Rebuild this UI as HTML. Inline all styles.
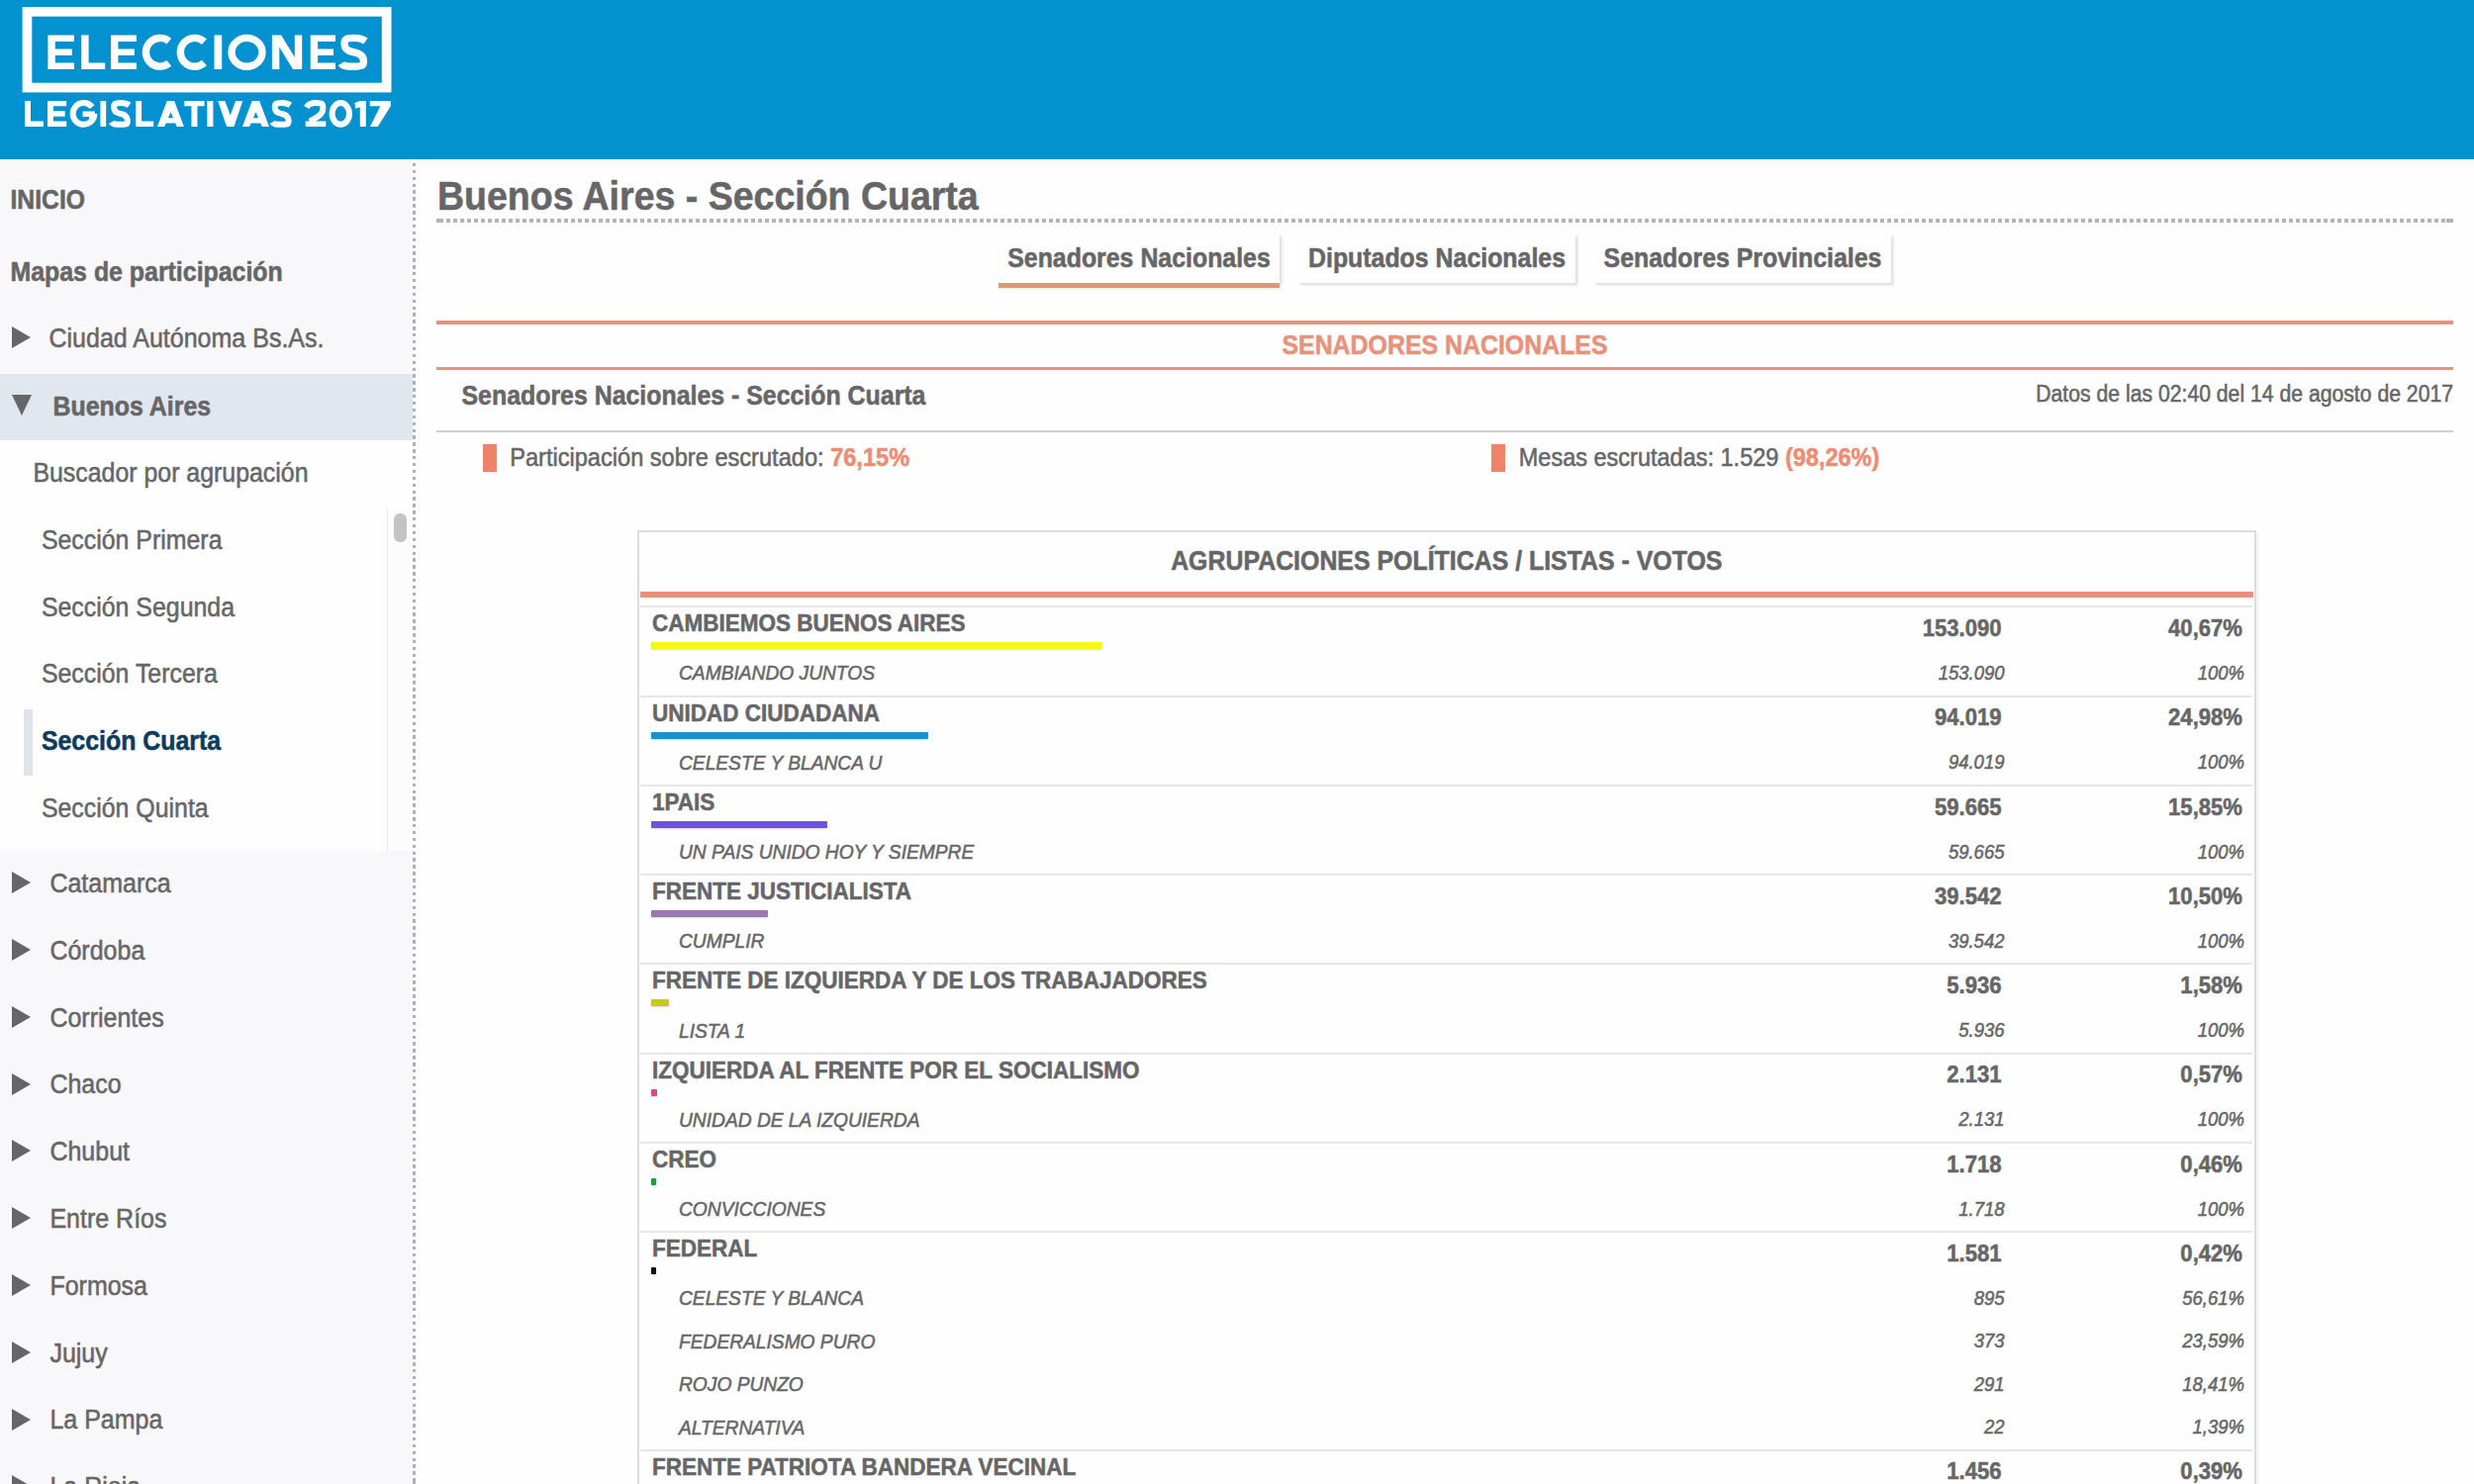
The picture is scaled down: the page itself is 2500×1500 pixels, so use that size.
<!DOCTYPE html>
<html><head><meta charset="utf-8"><title>Elecciones Legislativas 2017</title>
<style>
html,body{margin:0;padding:0;}
body{width:2500px;height:1500px;overflow:hidden;position:relative;background:#fefefe;font-family:"Liberation Sans",sans-serif;color:#666668;}
.t{position:absolute;line-height:1;white-space:nowrap;}
.r{position:absolute;}
.b{font-weight:bold;}
.tri{position:absolute;width:0;height:0;}
</style></head><body>
<div class="r" style="left:0px;top:0px;width:2500px;height:161px;background:#0391d0;"></div>
<svg style="position:absolute;left:0;top:0" width="420" height="160" viewBox="0 0 420 160"><rect x="27.45" y="11.85" width="363.2" height="76.7" fill="none" stroke="#fdfdfd" stroke-width="9.7"/><path d="M48.40 35.60H55.80V70.00H48.40ZM48.40 35.60H74.90V42.00H48.40ZM48.40 49.60H72.78V56.00H48.40ZM48.40 63.60H74.90V70.00H48.40ZM82.20 35.60H89.60V70.00H82.20ZM82.20 63.60H106.20V70.00H82.20ZM112.00 35.60H119.40V70.00H112.00ZM112.00 35.60H137.90V42.00H112.00ZM112.00 49.60H135.83V56.00H112.00ZM112.00 63.60H137.90V70.00H112.00ZM216.50 35.60H224.20V70.00H216.50ZM274.90 35.60H282.30V70.00H274.90ZM297.80 35.60H305.20V70.00H297.80ZM274.90 35.60L284.15 35.60L305.20 70.00L295.95 70.00ZM313.70 35.60H321.10V70.00H313.70ZM313.70 35.60H339.00V42.00H313.70ZM313.70 49.60H336.98V56.00H313.70ZM313.70 63.60H339.00V70.00H313.70ZM25.00 101.90H31.00V128.00H25.00ZM25.00 122.60H43.80V128.00H25.00ZM48.00 101.90H54.00V128.00H48.00ZM48.00 101.90H67.20V107.30H48.00ZM48.00 112.25H65.66V117.65H48.00ZM48.00 122.60H67.20V128.00H48.00ZM83.55 112.55H96.00V117.95H83.55ZM90.00 112.55H96.00V121.46H90.00ZM101.40 101.90H107.20V128.00H101.40ZM137.10 101.90H143.10V128.00H137.10ZM137.10 122.60H155.20V128.00H137.10ZM159.00 128.00L168.73 101.90L176.17 101.90L185.90 128.00L178.70 128.00L172.45 113.30L166.20 128.00ZM164.92 119.13H179.98V124.53H164.92ZM186.30 101.90H206.60V107.30H186.30ZM193.45 101.90H199.45V128.00H193.45ZM209.30 101.90H215.40V128.00H209.30ZM220.20 101.90L227.40 101.90L232.75 116.60L238.10 101.90L245.30 101.90L236.47 128.00L229.03 128.00ZM244.90 128.00L254.73 101.90L262.17 101.90L272.00 128.00L264.80 128.00L258.45 113.30L252.10 128.00ZM250.86 119.13H266.04V124.53H250.86ZM308.70 122.60H329.30V128.00H308.70ZM363.80 101.90H369.80V128.00H363.80ZM363.80 101.90L368.60 106.70L359.30 109.73L358.40 104.03ZM373.80 101.90H394.80V107.30H373.80ZM387.00 101.90L394.80 101.90L394.80 107.30L381.78 128.00L373.98 128.00Z" fill="#fdfdfd"/><path d="M170.86 41.61A14.40 14.40 0 1 0 170.86 63.99M206.40 42.16A14.40 14.40 0 1 0 206.40 63.44M265.00 52.80A15.50 14.40 0 1 0 234.00 52.80A15.50 14.40 0 1 0 265.00 52.80M369.50 41.58C365.23 38.40 359.08 38.40 357.75 38.40C347.60 38.40 348.10 40.89 348.10 44.68C348.10 51.42 354.55 52.11 357.75 52.80C360.95 53.49 367.40 54.86 367.40 61.61C367.40 66.08 367.36 67.20 357.75 67.20C350.27 67.20 346.54 66.77 344.93 64.02" fill="none" stroke="#fdfdfd" stroke-width="7.4"/><path d="M93.10 108.27A10.85 10.85 0 1 0 95.40 114.95M130.62 106.32C127.49 104.10 122.98 104.10 122.00 104.10C114.55 104.10 115.20 105.80 115.20 108.67C115.20 113.91 119.65 114.43 122.00 114.95C124.35 115.47 128.80 116.52 128.80 121.75C128.80 125.15 129.06 125.80 122.00 125.80C116.51 125.80 113.77 125.67 112.59 123.58M293.41 106.32C290.24 104.10 285.69 104.10 284.70 104.10C277.18 104.10 277.80 105.80 277.80 108.67C277.80 113.91 282.32 114.43 284.70 114.95C287.08 115.47 291.60 116.52 291.60 121.75C291.60 125.15 291.83 125.80 284.70 125.80C279.16 125.80 276.38 125.67 275.20 123.58M309.73 108.43C311.79 104.90 316.94 104.10 319.00 104.10C327.24 104.10 326.30 105.81 326.30 109.73C326.30 113.65 325.18 116.26 312.90 122.60M353.00 114.95A8.70 10.85 0 1 0 335.60 114.95A8.70 10.85 0 1 0 353.00 114.95" fill="none" stroke="#fdfdfd" stroke-width="6.0"/></svg>
<div class="r" style="left:0px;top:161px;width:417px;height:1339px;background:#f8f7f9;"></div>
<div class="r" style="left:416.5px;top:161px;width:3.5px;height:1339px;background:repeating-linear-gradient(to bottom,#b0b0b2 0,#b0b0b2 3.4px,transparent 3.4px,transparent 6.888px);background-position:0 -3.1px;"></div>
<div class="t " style="top:190.6px;font-size:24.7px;left:10.5px;font-weight:bold;transform:scaleY(1.085);transform-origin:0 20.91px;-webkit-text-stroke:0.5px currentColor;">INICIO</div>
<div class="t " style="top:262.6px;font-size:24.9px;left:10.5px;font-weight:bold;transform:scaleY(1.085);transform-origin:0 21.08px;-webkit-text-stroke:0.5px currentColor;">Mapas de participación</div>
<div class="tri" style="left:12px;top:329.6px;border-top:11px solid transparent;border-bottom:11px solid transparent;border-left:19px solid #666668;"></div>
<div class="t " style="top:330.4px;font-size:25px;left:49.5px;transform:scaleY(1.085);transform-origin:0 21.17px;-webkit-text-stroke:0.5px currentColor;">Ciudad Autónoma Bs.As.</div>
<div class="r" style="left:0px;top:378px;width:417px;height:67px;background:#e1e7ee;"></div>
<div class="tri" style="left:12px;top:398.7px;border-left:10.5px solid transparent;border-right:10.5px solid transparent;border-top:21px solid #666668;"></div>
<div class="t " style="top:398.6px;font-size:24.9px;left:53.6px;font-weight:bold;transform:scaleY(1.085);transform-origin:0 21.08px;-webkit-text-stroke:0.5px currentColor;">Buenos Aires</div>
<div class="r" style="left:0px;top:445px;width:417px;height:68px;background:#fefefe;"></div>
<div class="r" style="left:0px;top:513px;width:391px;height:347px;background:#fefefe;"></div>
<div class="r" style="left:391px;top:513px;width:25.5px;height:347px;background:#fcfcfd;"></div>
<div class="r" style="left:390.5px;top:513px;width:1.5px;height:347px;background:#e9e9eb;"></div>
<div class="r" style="left:398px;top:519px;width:13px;height:29px;border-radius:6px;background:#c3c3c5;"></div>
<div class="t " style="top:466.4px;font-size:24.9px;left:33.4px;transform:scaleY(1.085);transform-origin:0 21.08px;-webkit-text-stroke:0.5px currentColor;">Buscador por agrupación</div>
<div class="t " style="top:533.5px;font-size:24.9px;left:41.9px;transform:scaleY(1.085);transform-origin:0 21.08px;-webkit-text-stroke:0.5px currentColor;">Sección Primera</div>
<div class="t " style="top:601.5px;font-size:24.9px;left:41.9px;transform:scaleY(1.085);transform-origin:0 21.08px;-webkit-text-stroke:0.5px currentColor;">Sección Segunda</div>
<div class="t " style="top:669.4px;font-size:24.9px;left:41.9px;transform:scaleY(1.085);transform-origin:0 21.08px;-webkit-text-stroke:0.5px currentColor;">Sección Tercera</div>
<div class="r" style="left:24px;top:717px;width:9px;height:67px;background:#dfe4eb;"></div>
<div class="t " style="top:737.4px;font-size:24.9px;left:41.9px;color:#0d3b5c;font-weight:bold;transform:scaleY(1.085);transform-origin:0 21.08px;-webkit-text-stroke:0.5px currentColor;">Sección Cuarta</div>
<div class="t " style="top:805.3px;font-size:24.9px;left:41.9px;transform:scaleY(1.085);transform-origin:0 21.08px;-webkit-text-stroke:0.5px currentColor;">Sección Quinta</div>
<div class="tri" style="left:12px;top:881.2px;border-top:11px solid transparent;border-bottom:11px solid transparent;border-left:19px solid #666668;"></div>
<div class="t " style="top:881.0px;font-size:25px;left:50.4px;transform:scaleY(1.085);transform-origin:0 21.17px;-webkit-text-stroke:0.5px currentColor;">Catamarca</div>
<div class="tri" style="left:12px;top:949.0px;border-top:11px solid transparent;border-bottom:11px solid transparent;border-left:19px solid #666668;"></div>
<div class="t " style="top:948.8px;font-size:25px;left:50.4px;transform:scaleY(1.085);transform-origin:0 21.17px;-webkit-text-stroke:0.5px currentColor;">Córdoba</div>
<div class="tri" style="left:12px;top:1016.8px;border-top:11px solid transparent;border-bottom:11px solid transparent;border-left:19px solid #666668;"></div>
<div class="t " style="top:1016.6px;font-size:25px;left:50.4px;transform:scaleY(1.085);transform-origin:0 21.17px;-webkit-text-stroke:0.5px currentColor;">Corrientes</div>
<div class="tri" style="left:12px;top:1084.6px;border-top:11px solid transparent;border-bottom:11px solid transparent;border-left:19px solid #666668;"></div>
<div class="t " style="top:1084.4px;font-size:25px;left:50.4px;transform:scaleY(1.085);transform-origin:0 21.17px;-webkit-text-stroke:0.5px currentColor;">Chaco</div>
<div class="tri" style="left:12px;top:1152.4px;border-top:11px solid transparent;border-bottom:11px solid transparent;border-left:19px solid #666668;"></div>
<div class="t " style="top:1152.2px;font-size:25px;left:50.4px;transform:scaleY(1.085);transform-origin:0 21.17px;-webkit-text-stroke:0.5px currentColor;">Chubut</div>
<div class="tri" style="left:12px;top:1220.2px;border-top:11px solid transparent;border-bottom:11px solid transparent;border-left:19px solid #666668;"></div>
<div class="t " style="top:1220.0px;font-size:25px;left:50.4px;transform:scaleY(1.085);transform-origin:0 21.17px;-webkit-text-stroke:0.5px currentColor;">Entre Ríos</div>
<div class="tri" style="left:12px;top:1288.0px;border-top:11px solid transparent;border-bottom:11px solid transparent;border-left:19px solid #666668;"></div>
<div class="t " style="top:1287.8px;font-size:25px;left:50.4px;transform:scaleY(1.085);transform-origin:0 21.17px;-webkit-text-stroke:0.5px currentColor;">Formosa</div>
<div class="tri" style="left:12px;top:1355.8px;border-top:11px solid transparent;border-bottom:11px solid transparent;border-left:19px solid #666668;"></div>
<div class="t " style="top:1355.6px;font-size:25px;left:50.4px;transform:scaleY(1.085);transform-origin:0 21.17px;-webkit-text-stroke:0.5px currentColor;">Jujuy</div>
<div class="tri" style="left:12px;top:1423.6px;border-top:11px solid transparent;border-bottom:11px solid transparent;border-left:19px solid #666668;"></div>
<div class="t " style="top:1423.4px;font-size:25px;left:50.4px;transform:scaleY(1.085);transform-origin:0 21.17px;-webkit-text-stroke:0.5px currentColor;">La Pampa</div>
<div class="tri" style="left:12px;top:1491.4px;border-top:11px solid transparent;border-bottom:11px solid transparent;border-left:19px solid #666668;"></div>
<div class="t " style="top:1491.2px;font-size:25px;left:50.4px;transform:scaleY(1.085);transform-origin:0 21.17px;-webkit-text-stroke:0.5px currentColor;">La Rioja</div>
<div class="t " style="top:180.8px;font-size:37.5px;left:442.0px;font-weight:bold;transform:scaleY(1.085);transform-origin:0 31.75px;-webkit-text-stroke:0.5px currentColor;">Buenos Aires - Sección Cuarta</div>
<div class="r" style="left:444px;top:221px;width:2028px;height:3.8px;background:repeating-linear-gradient(to right,#b4b4b6 0,#b4b4b6 3.75px,transparent 3.75px,transparent 7px);"></div>
<div class="r" style="left:441px;top:221px;width:4px;height:3.8000000000000114px;background:#b4b4b6;"></div>
<div class="r" style="left:2472px;top:221px;width:7px;height:3.8000000000000114px;background:#b4b4b6;"></div>
<div class="r" style="left:1009px;top:237px;width:284px;height:49px;background:#fefefe;box-shadow:2px 2px 3px rgba(0,0,0,0.15);"></div>
<div class="r" style="left:1009px;top:286px;width:284px;height:5px;background:#e8927b;box-shadow:0 1px 2px rgba(0,0,0,0.1);"></div>
<div class="t " style="top:248.9px;font-size:24.9px;left:1151.0px;font-weight:bold;transform:translateX(-50%) scaleY(1.085);transform-origin:0 21.08px;-webkit-text-stroke:0.5px currentColor;">Senadores Nacionales</div>
<div class="r" style="left:1312px;top:237px;width:280px;height:49px;background:#fefefe;box-shadow:2px 2px 3px rgba(0,0,0,0.15);"></div>
<div class="t " style="top:248.9px;font-size:24.9px;left:1452.0px;font-weight:bold;transform:translateX(-50%) scaleY(1.085);transform-origin:0 21.08px;-webkit-text-stroke:0.5px currentColor;">Diputados Nacionales</div>
<div class="r" style="left:1611px;top:237px;width:300px;height:49px;background:#fefefe;box-shadow:2px 2px 3px rgba(0,0,0,0.15);"></div>
<div class="t " style="top:248.9px;font-size:24.9px;left:1761.0px;font-weight:bold;transform:translateX(-50%) scaleY(1.085);transform-origin:0 21.08px;-webkit-text-stroke:0.5px currentColor;">Senadores Provinciales</div>
<div class="r" style="left:441px;top:324px;width:2038px;height:4px;background:#e8927b;"></div>
<div class="t " style="top:336.5px;font-size:24.9px;left:1460.0px;color:#e8927b;font-weight:bold;transform:translateX(-50%) scaleY(1.085);transform-origin:0 21.08px;-webkit-text-stroke:0.5px currentColor;">SENADORES NACIONALES</div>
<div class="r" style="left:441px;top:371px;width:2038px;height:3px;background:#e8927b;"></div>
<div class="t " style="top:387.7px;font-size:24.9px;left:466.5px;font-weight:bold;transform:scaleY(1.085);transform-origin:0 21.08px;-webkit-text-stroke:0.5px currentColor;">Senadores Nacionales - Sección Cuarta</div>
<div class="t " style="top:387.6px;font-size:21.2px;right:21.0px;transform:scaleY(1.085);transform-origin:100% 17.95px;-webkit-text-stroke:0.5px currentColor;">Datos de las 02:40 del 14 de agosto de 2017</div>
<div class="r" style="left:441px;top:435px;width:2038px;height:2px;background:#cfcfd1;"></div>
<div class="r" style="left:488px;top:449px;width:14px;height:28px;background:#f08269;"></div>
<div class="t " style="top:451.8px;font-size:23.6px;left:515.2px;transform:scaleY(1.085);transform-origin:0 19.98px;-webkit-text-stroke:0.5px currentColor;">Participación sobre escrutado: <b style="color:#ef8b72">76,15%</b></div>
<div class="r" style="left:1507px;top:449px;width:14px;height:28px;background:#f08269;"></div>
<div class="t " style="top:451.6px;font-size:23.5px;left:1534.8px;transform:scaleY(1.085);transform-origin:0 19.90px;-webkit-text-stroke:0.5px currentColor;">Mesas escrutadas: 1.529 <b style="color:#ef8b72">(98,26%)</b></div>
<div class="r" style="left:644px;top:536px;width:1631.5px;height:1000px;border:2px solid #dcdcde;border-bottom:none;background:#fefefe;box-shadow:2px 2px 3px rgba(0,0,0,0.06);"></div>
<div class="t " style="top:554.9px;font-size:24.9px;left:1461.8px;font-weight:bold;transform:translateX(-50%) scaleY(1.085);transform-origin:0 21.08px;-webkit-text-stroke:0.5px currentColor;">AGRUPACIONES POLÍTICAS / LISTAS - VOTOS</div>
<div class="r" style="left:647px;top:598px;width:1630px;height:6px;background:#e8927b;"></div>
<div class="r" style="left:647px;top:612px;width:1629px;height:2px;background:#e6e6e8;"></div>
<div class="t " style="top:620.2px;font-size:22.5px;left:658.9px;font-weight:bold;transform:scaleY(1.085);transform-origin:0 19.05px;-webkit-text-stroke:0.5px currentColor;">CAMBIEMOS BUENOS AIRES</div>
<div class="t " style="top:624.9px;font-size:22.1px;right:477.4px;font-weight:bold;transform:scaleY(1.085);transform-origin:100% 18.71px;-webkit-text-stroke:0.5px currentColor;">153.090</div>
<div class="t " style="top:624.9px;font-size:22.1px;right:234.0px;font-weight:bold;transform:scaleY(1.085);transform-origin:100% 18.71px;-webkit-text-stroke:0.5px currentColor;">40,67%</div>
<div class="r" style="left:658px;top:649px;width:456px;height:7px;background:#f6f61a;box-shadow:0 1px 2px rgba(0,0,0,0.15);border-radius:1px;"></div>
<div class="t " style="top:671.3px;font-size:19.2px;left:686.0px;font-style:italic;transform:scaleY(1.085);transform-origin:0 16.26px;-webkit-text-stroke:0.5px currentColor;">CAMBIANDO JUNTOS</div>
<div class="t " style="top:671.9px;font-size:18.5px;right:474.5px;font-style:italic;transform:scaleY(1.085);transform-origin:100% 15.66px;-webkit-text-stroke:0.5px currentColor;">153.090</div>
<div class="t " style="top:671.9px;font-size:18.5px;right:232.0px;font-style:italic;transform:scaleY(1.085);transform-origin:100% 15.66px;-webkit-text-stroke:0.5px currentColor;">100%</div>
<div class="r" style="left:647px;top:703px;width:1629px;height:2px;background:#e6e6e8;"></div>
<div class="t " style="top:710.5px;font-size:22.5px;left:658.9px;font-weight:bold;transform:scaleY(1.085);transform-origin:0 19.05px;-webkit-text-stroke:0.5px currentColor;">UNIDAD CIUDADANA</div>
<div class="t " style="top:715.2px;font-size:22.1px;right:477.4px;font-weight:bold;transform:scaleY(1.085);transform-origin:100% 18.71px;-webkit-text-stroke:0.5px currentColor;">94.019</div>
<div class="t " style="top:715.2px;font-size:22.1px;right:234.0px;font-weight:bold;transform:scaleY(1.085);transform-origin:100% 18.71px;-webkit-text-stroke:0.5px currentColor;">24,98%</div>
<div class="r" style="left:658px;top:740px;width:280px;height:7px;background:#1d90cb;box-shadow:0 1px 2px rgba(0,0,0,0.15);border-radius:1px;"></div>
<div class="t " style="top:761.6px;font-size:19.2px;left:686.0px;font-style:italic;transform:scaleY(1.085);transform-origin:0 16.26px;-webkit-text-stroke:0.5px currentColor;">CELESTE Y BLANCA U</div>
<div class="t " style="top:762.2px;font-size:18.5px;right:474.5px;font-style:italic;transform:scaleY(1.085);transform-origin:100% 15.66px;-webkit-text-stroke:0.5px currentColor;">94.019</div>
<div class="t " style="top:762.2px;font-size:18.5px;right:232.0px;font-style:italic;transform:scaleY(1.085);transform-origin:100% 15.66px;-webkit-text-stroke:0.5px currentColor;">100%</div>
<div class="r" style="left:647px;top:793px;width:1629px;height:2px;background:#e6e6e8;"></div>
<div class="t " style="top:800.8px;font-size:22.5px;left:658.9px;font-weight:bold;transform:scaleY(1.085);transform-origin:0 19.05px;-webkit-text-stroke:0.5px currentColor;">1PAIS</div>
<div class="t " style="top:805.5px;font-size:22.1px;right:477.4px;font-weight:bold;transform:scaleY(1.085);transform-origin:100% 18.71px;-webkit-text-stroke:0.5px currentColor;">59.665</div>
<div class="t " style="top:805.5px;font-size:22.1px;right:234.0px;font-weight:bold;transform:scaleY(1.085);transform-origin:100% 18.71px;-webkit-text-stroke:0.5px currentColor;">15,85%</div>
<div class="r" style="left:658px;top:830px;width:178px;height:7px;background:#6f53df;box-shadow:0 1px 2px rgba(0,0,0,0.15);border-radius:1px;"></div>
<div class="t " style="top:851.9px;font-size:19.2px;left:686.0px;font-style:italic;transform:scaleY(1.085);transform-origin:0 16.26px;-webkit-text-stroke:0.5px currentColor;">UN PAIS UNIDO HOY Y SIEMPRE</div>
<div class="t " style="top:852.5px;font-size:18.5px;right:474.5px;font-style:italic;transform:scaleY(1.085);transform-origin:100% 15.66px;-webkit-text-stroke:0.5px currentColor;">59.665</div>
<div class="t " style="top:852.5px;font-size:18.5px;right:232.0px;font-style:italic;transform:scaleY(1.085);transform-origin:100% 15.66px;-webkit-text-stroke:0.5px currentColor;">100%</div>
<div class="r" style="left:647px;top:883px;width:1629px;height:2px;background:#e6e6e8;"></div>
<div class="t " style="top:891.1px;font-size:22.5px;left:658.9px;font-weight:bold;transform:scaleY(1.085);transform-origin:0 19.05px;-webkit-text-stroke:0.5px currentColor;">FRENTE JUSTICIALISTA</div>
<div class="t " style="top:895.8px;font-size:22.1px;right:477.4px;font-weight:bold;transform:scaleY(1.085);transform-origin:100% 18.71px;-webkit-text-stroke:0.5px currentColor;">39.542</div>
<div class="t " style="top:895.8px;font-size:22.1px;right:234.0px;font-weight:bold;transform:scaleY(1.085);transform-origin:100% 18.71px;-webkit-text-stroke:0.5px currentColor;">10,50%</div>
<div class="r" style="left:658px;top:920px;width:118px;height:7px;background:#9878ae;box-shadow:0 1px 2px rgba(0,0,0,0.15);border-radius:1px;"></div>
<div class="t " style="top:942.2px;font-size:19.2px;left:686.0px;font-style:italic;transform:scaleY(1.085);transform-origin:0 16.26px;-webkit-text-stroke:0.5px currentColor;">CUMPLIR</div>
<div class="t " style="top:942.8px;font-size:18.5px;right:474.5px;font-style:italic;transform:scaleY(1.085);transform-origin:100% 15.66px;-webkit-text-stroke:0.5px currentColor;">39.542</div>
<div class="t " style="top:942.8px;font-size:18.5px;right:232.0px;font-style:italic;transform:scaleY(1.085);transform-origin:100% 15.66px;-webkit-text-stroke:0.5px currentColor;">100%</div>
<div class="r" style="left:647px;top:973px;width:1629px;height:2px;background:#e6e6e8;"></div>
<div class="t " style="top:981.4px;font-size:22.5px;left:658.9px;font-weight:bold;transform:scaleY(1.085);transform-origin:0 19.05px;-webkit-text-stroke:0.5px currentColor;">FRENTE DE IZQUIERDA Y DE LOS TRABAJADORES</div>
<div class="t " style="top:986.1px;font-size:22.1px;right:477.4px;font-weight:bold;transform:scaleY(1.085);transform-origin:100% 18.71px;-webkit-text-stroke:0.5px currentColor;">5.936</div>
<div class="t " style="top:986.1px;font-size:22.1px;right:234.0px;font-weight:bold;transform:scaleY(1.085);transform-origin:100% 18.71px;-webkit-text-stroke:0.5px currentColor;">1,58%</div>
<div class="r" style="left:658px;top:1010px;width:18px;height:7px;background:#c9c91c;box-shadow:0 1px 2px rgba(0,0,0,0.15);border-radius:1px;"></div>
<div class="t " style="top:1032.5px;font-size:19.2px;left:686.0px;font-style:italic;transform:scaleY(1.085);transform-origin:0 16.26px;-webkit-text-stroke:0.5px currentColor;">LISTA 1</div>
<div class="t " style="top:1033.1px;font-size:18.5px;right:474.5px;font-style:italic;transform:scaleY(1.085);transform-origin:100% 15.66px;-webkit-text-stroke:0.5px currentColor;">5.936</div>
<div class="t " style="top:1033.1px;font-size:18.5px;right:232.0px;font-style:italic;transform:scaleY(1.085);transform-origin:100% 15.66px;-webkit-text-stroke:0.5px currentColor;">100%</div>
<div class="r" style="left:647px;top:1064px;width:1629px;height:2px;background:#e6e6e8;"></div>
<div class="t " style="top:1071.7px;font-size:22.5px;left:658.9px;font-weight:bold;transform:scaleY(1.085);transform-origin:0 19.05px;-webkit-text-stroke:0.5px currentColor;">IZQUIERDA AL FRENTE POR EL SOCIALISMO</div>
<div class="t " style="top:1076.4px;font-size:22.1px;right:477.4px;font-weight:bold;transform:scaleY(1.085);transform-origin:100% 18.71px;-webkit-text-stroke:0.5px currentColor;">2.131</div>
<div class="t " style="top:1076.4px;font-size:22.1px;right:234.0px;font-weight:bold;transform:scaleY(1.085);transform-origin:100% 18.71px;-webkit-text-stroke:0.5px currentColor;">0,57%</div>
<div class="r" style="left:658px;top:1101px;width:6px;height:7px;background:#e0458c;box-shadow:0 1px 2px rgba(0,0,0,0.15);border-radius:1px;"></div>
<div class="t " style="top:1122.8px;font-size:19.2px;left:686.0px;font-style:italic;transform:scaleY(1.085);transform-origin:0 16.26px;-webkit-text-stroke:0.5px currentColor;">UNIDAD DE LA IZQUIERDA</div>
<div class="t " style="top:1123.4px;font-size:18.5px;right:474.5px;font-style:italic;transform:scaleY(1.085);transform-origin:100% 15.66px;-webkit-text-stroke:0.5px currentColor;">2.131</div>
<div class="t " style="top:1123.4px;font-size:18.5px;right:232.0px;font-style:italic;transform:scaleY(1.085);transform-origin:100% 15.66px;-webkit-text-stroke:0.5px currentColor;">100%</div>
<div class="r" style="left:647px;top:1154px;width:1629px;height:2px;background:#e6e6e8;"></div>
<div class="t " style="top:1162.0px;font-size:22.5px;left:658.9px;font-weight:bold;transform:scaleY(1.085);transform-origin:0 19.05px;-webkit-text-stroke:0.5px currentColor;">CREO</div>
<div class="t " style="top:1166.7px;font-size:22.1px;right:477.4px;font-weight:bold;transform:scaleY(1.085);transform-origin:100% 18.71px;-webkit-text-stroke:0.5px currentColor;">1.718</div>
<div class="t " style="top:1166.7px;font-size:22.1px;right:234.0px;font-weight:bold;transform:scaleY(1.085);transform-origin:100% 18.71px;-webkit-text-stroke:0.5px currentColor;">0,46%</div>
<div class="r" style="left:658px;top:1191px;width:5px;height:7px;background:#20a030;box-shadow:0 1px 2px rgba(0,0,0,0.15);border-radius:1px;"></div>
<div class="t " style="top:1213.1px;font-size:19.2px;left:686.0px;font-style:italic;transform:scaleY(1.085);transform-origin:0 16.26px;-webkit-text-stroke:0.5px currentColor;">CONVICCIONES</div>
<div class="t " style="top:1213.7px;font-size:18.5px;right:474.5px;font-style:italic;transform:scaleY(1.085);transform-origin:100% 15.66px;-webkit-text-stroke:0.5px currentColor;">1.718</div>
<div class="t " style="top:1213.7px;font-size:18.5px;right:232.0px;font-style:italic;transform:scaleY(1.085);transform-origin:100% 15.66px;-webkit-text-stroke:0.5px currentColor;">100%</div>
<div class="r" style="left:647px;top:1244px;width:1629px;height:2px;background:#e6e6e8;"></div>
<div class="t " style="top:1252.3px;font-size:22.5px;left:658.9px;font-weight:bold;transform:scaleY(1.085);transform-origin:0 19.05px;-webkit-text-stroke:0.5px currentColor;">FEDERAL</div>
<div class="t " style="top:1257.0px;font-size:22.1px;right:477.4px;font-weight:bold;transform:scaleY(1.085);transform-origin:100% 18.71px;-webkit-text-stroke:0.5px currentColor;">1.581</div>
<div class="t " style="top:1257.0px;font-size:22.1px;right:234.0px;font-weight:bold;transform:scaleY(1.085);transform-origin:100% 18.71px;-webkit-text-stroke:0.5px currentColor;">0,42%</div>
<div class="r" style="left:658px;top:1281px;width:5px;height:7px;background:#111111;box-shadow:0 1px 2px rgba(0,0,0,0.15);border-radius:1px;"></div>
<div class="t " style="top:1303.4px;font-size:19.2px;left:686.0px;font-style:italic;transform:scaleY(1.085);transform-origin:0 16.26px;-webkit-text-stroke:0.5px currentColor;">CELESTE Y BLANCA</div>
<div class="t " style="top:1304.0px;font-size:18.5px;right:474.5px;font-style:italic;transform:scaleY(1.085);transform-origin:100% 15.66px;-webkit-text-stroke:0.5px currentColor;">895</div>
<div class="t " style="top:1304.0px;font-size:18.5px;right:232.0px;font-style:italic;transform:scaleY(1.085);transform-origin:100% 15.66px;-webkit-text-stroke:0.5px currentColor;">56,61%</div>
<div class="t " style="top:1346.8px;font-size:19.2px;left:686.0px;font-style:italic;transform:scaleY(1.085);transform-origin:0 16.26px;-webkit-text-stroke:0.5px currentColor;">FEDERALISMO PURO</div>
<div class="t " style="top:1347.4px;font-size:18.5px;right:474.5px;font-style:italic;transform:scaleY(1.085);transform-origin:100% 15.66px;-webkit-text-stroke:0.5px currentColor;">373</div>
<div class="t " style="top:1347.4px;font-size:18.5px;right:232.0px;font-style:italic;transform:scaleY(1.085);transform-origin:100% 15.66px;-webkit-text-stroke:0.5px currentColor;">23,59%</div>
<div class="t " style="top:1390.1px;font-size:19.2px;left:686.0px;font-style:italic;transform:scaleY(1.085);transform-origin:0 16.26px;-webkit-text-stroke:0.5px currentColor;">ROJO PUNZO</div>
<div class="t " style="top:1390.7px;font-size:18.5px;right:474.5px;font-style:italic;transform:scaleY(1.085);transform-origin:100% 15.66px;-webkit-text-stroke:0.5px currentColor;">291</div>
<div class="t " style="top:1390.7px;font-size:18.5px;right:232.0px;font-style:italic;transform:scaleY(1.085);transform-origin:100% 15.66px;-webkit-text-stroke:0.5px currentColor;">18,41%</div>
<div class="t " style="top:1433.5px;font-size:19.2px;left:686.0px;font-style:italic;transform:scaleY(1.085);transform-origin:0 16.26px;-webkit-text-stroke:0.5px currentColor;">ALTERNATIVA</div>
<div class="t " style="top:1434.1px;font-size:18.5px;right:474.5px;font-style:italic;transform:scaleY(1.085);transform-origin:100% 15.66px;-webkit-text-stroke:0.5px currentColor;">22</div>
<div class="t " style="top:1434.1px;font-size:18.5px;right:232.0px;font-style:italic;transform:scaleY(1.085);transform-origin:100% 15.66px;-webkit-text-stroke:0.5px currentColor;">1,39%</div>
<div class="r" style="left:647px;top:1465px;width:1629px;height:2px;background:#e6e6e8;"></div>
<div class="t " style="top:1472.7px;font-size:22.5px;left:658.9px;font-weight:bold;transform:scaleY(1.085);transform-origin:0 19.05px;-webkit-text-stroke:0.5px currentColor;">FRENTE PATRIOTA BANDERA VECINAL</div>
<div class="t " style="top:1477.3px;font-size:22.1px;right:477.4px;font-weight:bold;transform:scaleY(1.085);transform-origin:100% 18.71px;-webkit-text-stroke:0.5px currentColor;">1.456</div>
<div class="t " style="top:1477.3px;font-size:22.1px;right:234.0px;font-weight:bold;transform:scaleY(1.085);transform-origin:100% 18.71px;-webkit-text-stroke:0.5px currentColor;">0,39%</div>
<div class="r" style="left:658px;top:1502px;width:4px;height:7px;background:#888;box-shadow:0 1px 2px rgba(0,0,0,0.15);border-radius:1px;"></div>
<div class="t " style="top:1523.8px;font-size:19.2px;left:686.0px;font-style:italic;transform:scaleY(1.085);transform-origin:0 16.26px;-webkit-text-stroke:0.5px currentColor;">X</div>
<div class="t " style="top:1524.4px;font-size:18.5px;right:474.5px;font-style:italic;transform:scaleY(1.085);transform-origin:100% 15.66px;-webkit-text-stroke:0.5px currentColor;">1</div>
<div class="t " style="top:1524.4px;font-size:18.5px;right:232.0px;font-style:italic;transform:scaleY(1.085);transform-origin:100% 15.66px;-webkit-text-stroke:0.5px currentColor;">1</div>
<div class="r" style="left:647px;top:1555px;width:1629px;height:2px;background:#e6e6e8;"></div>
</body></html>
